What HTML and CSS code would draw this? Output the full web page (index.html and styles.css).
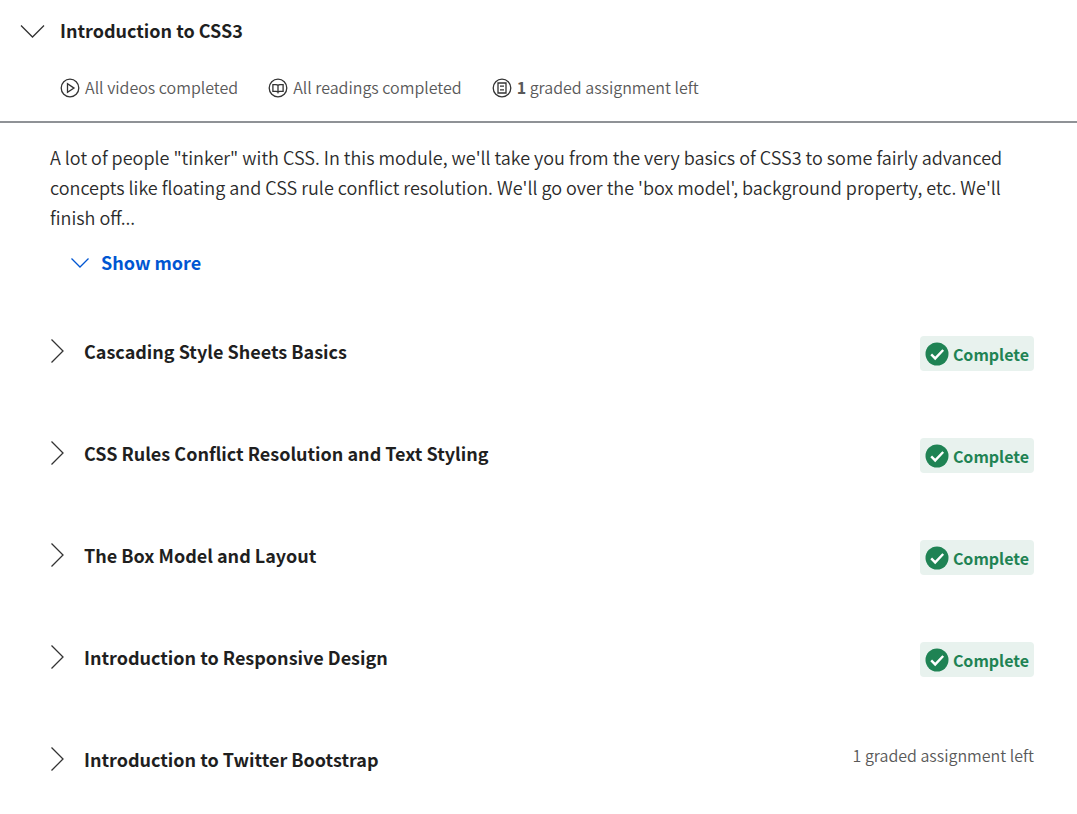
FILE: index.html
```html
<!DOCTYPE html>
<html lang="en">
<head>
<meta charset="utf-8">
<meta name="viewport" content="width=device-width, initial-scale=1">
<title>Introduction to CSS3</title>
<link rel="stylesheet" href="styles.css">
</head>
<body>
<main class="module">
  <header class="module-header">
    <h2 class="heading">
      <button class="module-toggle" type="button" aria-expanded="true">
        <svg class="chevron-large" viewBox="0 0 24 16" aria-hidden="true"><path d="M1 3.500 12.500 15 24 3.500"/></svg>
        <span>Introduction to CSS3</span>
      </button>
    </h2>
    <ul class="progress">
      <li class="progress-item">
        <svg class="progress-icon" viewBox="0 0 20 20" aria-hidden="true"><circle cx="10" cy="11" r="8.800"/><path d="M7.500 6.800v8.600l6.500-4.300z"/></svg>
        <span>All videos completed</span>
      </li>
      <li class="progress-item">
        <svg class="progress-icon" viewBox="0 0 20 20" aria-hidden="true"><circle cx="10" cy="11" r="8.800"/><path d="M10 8.500C9.600 7.800 9 7.700 8 7.700H4.900v6.600H8c1.200 0 1.700.2 2 1 .3-.8.800-1 2-1h3.100V7.700H12c-1 0-1.600.1-2 .8zM10 8.500v6.800"/></svg>
        <span>All readings completed</span>
      </li>
      <li class="progress-item">
        <svg class="progress-icon" viewBox="0 0 20 20" aria-hidden="true"><circle cx="10" cy="11" r="8.800"/><path d="M6 6h8v10H6zM8 9.200h4M8 12.800h4"/></svg>
        <span><strong>1</strong> graded assignment left</span>
      </li>
    </ul>
  </header>
  <section class="module-body">
    <p class="description">A lot of people "tinker" with CSS. In this module, we'll take you from the very basics of CSS3 to some fairly advanced concepts like floating and CSS rule conflict resolution. We'll go over the 'box model', background property, etc. We'll finish off...</p>
    <button class="show-more" type="button">
      <svg class="chevron-small" viewBox="0 0 18 12" aria-hidden="true"><path d="M.5 2.500 9 11 17.500 2.500"/></svg>
      <span>Show more</span>
    </button>
    <ul class="lessons">
      <li class="lesson">
        <h3 class="heading"><button class="lesson-toggle" type="button" aria-expanded="false"><svg class="chevron-side" viewBox="0 0 14 24" aria-hidden="true"><path d="M1.500 .5 13 12 1.500 23.500"/></svg><span>Cascading Style Sheets Basics</span></button></h3>
        <span class="badge"><svg class="check" viewBox="0 0 24 24" aria-hidden="true"><circle cx="12" cy="12" r="11.500"/><path d="m6.200 12.300 4 4.100 8-8.400"/></svg>Complete</span>
      </li>
      <li class="lesson">
        <h3 class="heading"><button class="lesson-toggle" type="button" aria-expanded="false"><svg class="chevron-side" viewBox="0 0 14 24" aria-hidden="true"><path d="M1.500 .5 13 12 1.500 23.500"/></svg><span>CSS Rules Conflict Resolution and Text Styling</span></button></h3>
        <span class="badge"><svg class="check" viewBox="0 0 24 24" aria-hidden="true"><circle cx="12" cy="12" r="11.500"/><path d="m6.200 12.300 4 4.100 8-8.400"/></svg>Complete</span>
      </li>
      <li class="lesson">
        <h3 class="heading"><button class="lesson-toggle" type="button" aria-expanded="false"><svg class="chevron-side" viewBox="0 0 14 24" aria-hidden="true"><path d="M1.500 .5 13 12 1.500 23.500"/></svg><span>The Box Model and Layout</span></button></h3>
        <span class="badge"><svg class="check" viewBox="0 0 24 24" aria-hidden="true"><circle cx="12" cy="12" r="11.500"/><path d="m6.200 12.300 4 4.100 8-8.400"/></svg>Complete</span>
      </li>
      <li class="lesson">
        <h3 class="heading"><button class="lesson-toggle" type="button" aria-expanded="false"><svg class="chevron-side" viewBox="0 0 14 24" aria-hidden="true"><path d="M1.500 .5 13 12 1.500 23.500"/></svg><span>Introduction to Responsive Design</span></button></h3>
        <span class="badge"><svg class="check" viewBox="0 0 24 24" aria-hidden="true"><circle cx="12" cy="12" r="11.500"/><path d="m6.200 12.300 4 4.100 8-8.400"/></svg>Complete</span>
      </li>
      <li class="lesson">
        <h3 class="heading"><button class="lesson-toggle" type="button" aria-expanded="false"><svg class="chevron-side" viewBox="0 0 14 24" aria-hidden="true"><path d="M1.500 .5 13 12 1.500 23.500"/></svg><span>Introduction to Twitter Bootstrap</span></button></h3>
        <span class="remaining">1 graded assignment left</span>
      </li>
    </ul>
  </section>
</main>
</body>
</html>
```
FILE: styles.css
```css
* {
  box-sizing: border-box;
}

body {
  margin: 0;
  background: #fff;
  color: #1f1f1f;
  font-family: "Source Sans Pro", "Noto Sans CJK SC", sans-serif;
  font-size: 18px;
  line-height: 30px;
}

button {
  display: flex;
  align-items: center;
  padding: 0;
  border: 0;
  background: none;
  color: inherit;
  font: inherit;
  font-weight: 700;
  text-align: left;
  cursor: pointer;
}

ul {
  margin: 0;
  padding: 0;
  list-style: none;
}

svg {
  flex: none;
  overflow: visible;
  fill: none;
  stroke: #333;
  stroke-width: 1.3;
}

.heading {
  margin: 0;
  font-size: 18px;
}

.module-header {
  padding: 15px 20px 19px;
  border-bottom: 2px solid #8f9296;
}

.module-toggle {
  gap: 16px;
}

.chevron-large {
  width: 24px;
  height: 16px;
}

.progress {
  display: flex;
  flex-wrap: wrap;
  gap: 8px 30px;
  padding: 27px 0 0 40px;
  color: #595959;
  font-size: 16px;
  font-weight: 350;
}

.progress-item {
  display: flex;
  align-items: center;
  gap: 5px;
}

.progress-icon {
  width: 20px;
  height: 20px;
}

.module-body {
  padding: 19px 43px 0 50px;
}

.description {
  margin: 0;
  color: #2b2b2b;
  font-weight: 350;
}

.show-more {
  gap: 12px;
  margin: 15px 0 0 21px;
  color: #0056d2;
}

.chevron-small {
  width: 18px;
  height: 12px;
  stroke: #0056d2;
}

.lessons {
  padding-top: 59px;
}

.lesson {
  display: flex;
  align-items: flex-start;
  justify-content: space-between;
  gap: 24px;
  padding-bottom: 67px;
}

.lesson:last-child {
  padding-bottom: 0;
}

.lesson-toggle {
  gap: 20px;
}

.chevron-side {
  width: 14px;
  height: 24px;
}

.badge {
  display: flex;
  flex: none;
  align-items: center;
  gap: 4px;
  height: 35px;
  padding: 0 5px;
  border-radius: 4px;
  background: #e8f2ee;
  color: #1f8354;
  font-size: 16px;
  font-weight: 700;
}

.check {
  width: 24px;
  height: 24px;
}

.check circle {
  fill: #1f8354;
  stroke: none;
}

.check path {
  stroke: #fff;
  stroke-width: 2.4;
}

.remaining {
  flex: none;
  color: #595959;
  font-size: 16px;
  font-weight: 350;
  line-height: 22px;
}
```
